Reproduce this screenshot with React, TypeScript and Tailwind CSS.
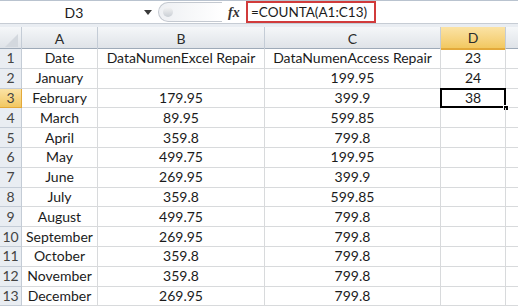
const rows: [string, string, string, string][] = [
  ["Date", "DataNumenExcel Repair", "DataNumenAccess Repair", "23"],
  ["January", "", "199.95", "24"],
  ["February", "179.95", "399.9", "38"],
  ["March", "89.95", "599.85", ""],
  ["April", "359.8", "799.8", ""],
  ["May", "499.75", "199.95", ""],
  ["June", "269.95", "399.9", ""],
  ["July", "359.8", "599.85", ""],
  ["August", "499.75", "799.8", ""],
  ["September", "269.95", "799.8", ""],
  ["October", "359.8", "799.8", ""],
  ["November", "359.8", "799.8", ""],
  ["December", "269.95", "799.8", ""],
];

const cols = "grid grid-cols-[22px_76px_167px_176px_65px_1fr]";

export default function App() {
  return (
    <div className="w-[518px] h-[308px] overflow-hidden bg-white text-[#1b1b1b] font-['Lato',sans-serif]">
      {/* formula bar */}
      <div className="h-[27px] bg-[#e9edf2] border-t border-[#b9c3cf] flex flex-col">
        <div className="h-[23px] flex items-center bg-white border-b border-[#c6ccd4]">
          <div className="w-[140px] text-center text-[14px] pl-2">D3</div>
          <div className="w-[16px] flex justify-center">
            <svg width="8" height="5" viewBox="0 0 8 5"><path d="M0 0h8L4 5z" fill="#3a3a3a" /></svg>
          </div>
          <div className="ml-[2px] w-[64px] h-[20px] rounded-l-full border border-[#c4c9d0] border-r-0 bg-gradient-to-r from-[#eef0f3] to-white flex items-center pl-[4px]">
            <div className="w-[10px] h-[10px] rounded-full bg-gradient-to-b from-[#f4f4f4] to-[#c9ced4]" />
          </div>
          <div className="w-[18px] text-[14px] italic font-['Liberation_Serif',serif] font-bold text-[#333] ml-[6px]">fx</div>
          <div className="h-[22px] w-[130px] border-2 border-[#d13b3b] flex items-center pl-[3px] text-[13.5px]">
            =COUNTA(A1:C13)
          </div>
        </div>
      </div>
      {/* column headers */}
      <div className={`${cols} h-[22px] bg-gradient-to-b from-[#f5f7f9] to-[#dfe3e8] border-b border-[#9eaab8] text-[14px] text-[#2b2b2b]`}>
        <div className="border-r border-[#c4ccd6] flex items-end justify-end p-[3px]">
          <svg width="13" height="13" viewBox="0 0 13 13"><path d="M13 0v13H0z" fill="#d3d8de" /></svg>
        </div>
        {["A", "B", "C"].map((c) => (
          <div key={c} className="border-r border-[#c4ccd6] flex items-center justify-center">{c}</div>
        ))}
        <div className="border-r border-[#c4ccd6] flex items-center justify-center bg-gradient-to-b from-[#fbe3a5] to-[#f2c860] border-b-2 border-b-[#e3a93a]">D</div>
        <div />
      </div>
      {/* rows */}
      {rows.map((r, i) => (
        <div key={i} className={`${cols} h-[19.8px] text-[14px] leading-none`}>
          <div
            className={`flex items-center justify-center border-r border-b text-[14px] text-[#444] ${
              i === 2 ? "bg-gradient-to-b from-[#fbe3a5] to-[#f2c860] border-[#e3a93a]" : "bg-[#e9edf2] border-[#c4ccd6]"
            }`}
          >
            {i + 1}
          </div>
          {r.map((v, j) => (
            <div key={j} className="relative flex items-center justify-center border-r border-b border-[#d8dadc] whitespace-nowrap">
              {v}
              {i === 2 && j === 3 && (
                <>
                  <div className="absolute inset-[-1px] border-2 border-black" />
                  <div className="absolute right-[-4px] bottom-[-4px] w-[6px] h-[6px] bg-black border border-white" />
                </>
              )}
            </div>
          ))}
          <div className="border-b border-[#d8dadc]" />
        </div>
      ))}
    </div>
  );
}
